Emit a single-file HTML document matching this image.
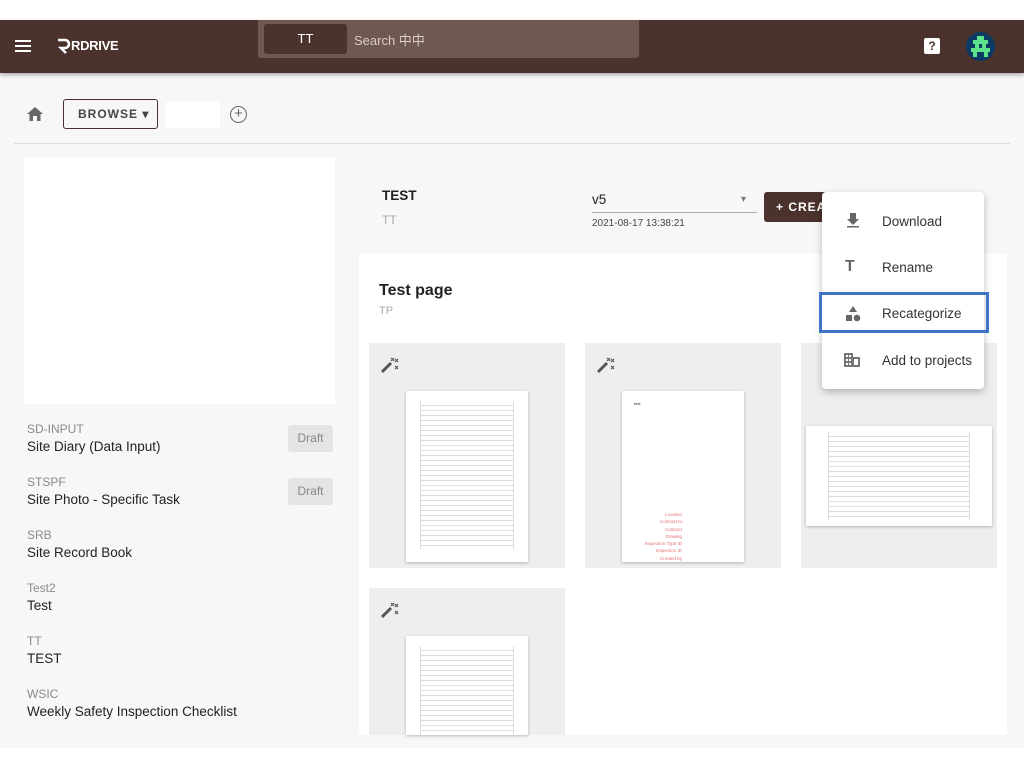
<!DOCTYPE html>
<html><head><style>
*{box-sizing:border-box;margin:0;padding:0}
body{width:1024px;height:768px;background:#fff;font-family:"Liberation Sans","Noto Sans CJK SC",sans-serif;position:relative;overflow:hidden;color:#212121}
.abs{position:absolute}
.hdr{left:0;top:20px;width:1024px;height:53px;background:#4b322c;box-shadow:0 2px 4px rgba(0,0,0,.3)}
.main{left:0;top:73px;width:1024px;height:675px;background:#f7f7f7}
.tile{background:#eeeeee}
.page{background:#fff;box-shadow:0 1px 3px rgba(0,0,0,.25)}
.lbl{font-size:12px;color:#8a8a8a}
.nm{font-size:13.5px;color:#222}
.draft{background:#e4e4e4;color:#888;font-size:12px;width:45px;height:27px;line-height:27px;text-align:center;border-radius:3px}
.mi{font-size:13.5px;color:#333}
.lines{background:repeating-linear-gradient(#fff 0 4px,#ddd 4px 5px);border-left:1px solid #ddd;border-right:1px solid #ddd}
</style></head><body>
<div class="abs main"></div>
<div class="abs hdr"></div>
<div class="abs" style="left:15px;top:40px;width:16px;height:2px;background:#fff;box-shadow:0 5px 0 #fff,0 10px 0 #fff"></div>
<svg class="abs" style="left:56px;top:37px" width="16" height="17"><path d="M2 3h7a4 4 0 0 1 0 8H5l5 5" stroke="#fff" stroke-width="2.6" fill="none"/></svg>
<div class="abs" style="left:71px;top:38px;color:#fff;font-size:13px;font-weight:bold;letter-spacing:-0.3px">RDRIVE</div>
<div class="abs" style="left:258px;top:20px;width:381px;height:38px;background:#6e5850;border-radius:0 0 3px 3px"></div>
<div class="abs" style="left:264px;top:24px;width:83px;height:30px;background:#4b322c;border-radius:3px;color:#fff;font-size:13px;text-align:center;line-height:30px">TT</div>
<div class="abs" style="left:354px;top:30px;color:#d8cdc8;font-size:13px">Search 中中</div>
<div class="abs" style="left:924px;top:38px;width:16px;height:16px;background:#fff;border-radius:2px;color:#4b322c;font-size:12px;font-weight:bold;text-align:center;line-height:16px">?</div>
<div class="abs" style="left:966px;top:32px;width:29px;height:29px;border-radius:50%;background:#0d3a63;overflow:hidden"><svg width="29" height="29"><g fill="#5de38a"><rect x="11" y="4" width="7" height="4"/><rect x="7" y="8" width="15" height="4"/><rect x="9" y="12" width="4" height="4"/><rect x="16" y="12" width="4" height="4"/><rect x="5" y="16" width="19" height="4"/><rect x="7" y="20" width="4" height="5"/><rect x="18" y="20" width="4" height="5"/></g></svg></div>
<svg class="abs" style="left:26px;top:106px" width="18" height="16"><path d="M9 1 L1 8 H3.5 V15 H7 V10 H11 V15 H14.5 V8 H17Z" fill="#666"/></svg>
<div class="abs" style="left:63px;top:99px;width:95px;height:30px;border:1px solid #4b322c;border-radius:3px;font-size:12px;font-weight:bold;letter-spacing:1px;color:#444;line-height:28px;padding-left:14px">BROWSE ▾</div>
<div class="abs" style="left:166px;top:102px;width:54px;height:26px;background:#fff"></div>
<div class="abs" style="left:230px;top:106px;width:17px;height:17px;border:1.5px solid #666;border-radius:50%;text-align:center;line-height:14px;font-size:15px;color:#666">+</div>
<div class="abs" style="left:14px;top:143px;width:996px;height:1px;background:#ddd"></div>
<div class="abs" style="left:24px;top:157px;width:311px;height:247px;background:#fff"></div>
<div class="abs lbl" style="left:27px;top:422px">SD-INPUT</div><div class="abs nm" style="left:27px;top:439px">Site Diary (Data Input)</div><div class="abs draft" style="left:288px;top:425px">Draft</div>
<div class="abs lbl" style="left:27px;top:475px">STSPF</div><div class="abs nm" style="left:27px;top:492px">Site Photo - Specific Task</div><div class="abs draft" style="left:288px;top:478px">Draft</div>
<div class="abs lbl" style="left:27px;top:528px">SRB</div><div class="abs nm" style="left:27px;top:545px">Site Record Book</div>
<div class="abs lbl" style="left:27px;top:581px">Test2</div><div class="abs nm" style="left:27px;top:598px">Test</div>
<div class="abs lbl" style="left:27px;top:634px">TT</div><div class="abs nm" style="left:27px;top:651px">TEST</div>
<div class="abs lbl" style="left:27px;top:687px">WSIC</div><div class="abs nm" style="left:27px;top:704px">Weekly Safety Inspection Checklist</div>
<div class="abs" style="left:382px;top:188px;font-size:13.5px;font-weight:bold">TEST</div>
<div class="abs lbl" style="left:382px;top:213px;color:#aaa">TT</div>
<div class="abs" style="left:592px;top:192px;font-size:13.5px">v5</div>
<div class="abs" style="left:741px;top:194px;font-size:10px;color:#777">▾</div>
<div class="abs" style="left:592px;top:212px;width:165px;height:1px;background:#aaa"></div>
<div class="abs" style="left:592px;top:218px;font-size:10px;color:#444">2021-08-17 13:38:21</div>
<div class="abs" style="left:764px;top:192px;width:80px;height:30px;background:#4b322c;border-radius:3px;color:#fff;font-size:12px;font-weight:bold;letter-spacing:1px;line-height:30px;padding-left:12px">+ CREATE</div>
<div class="abs" style="left:359px;top:254px;width:648px;height:481px;background:#fff"></div>
<div class="abs" style="left:379px;top:282px;font-size:16px;font-weight:bold;color:#222">Test page</div>
<div class="abs lbl" style="left:379px;top:305px;color:#aaa;font-size:11px">TP</div>
<div class="abs tile" style="left:369px;top:343px;width:196px;height:225px"></div>
<div class="abs tile" style="left:585px;top:343px;width:196px;height:225px"></div>
<div class="abs tile" style="left:801px;top:343px;width:196px;height:225px"></div>
<div class="abs tile" style="left:369px;top:588px;width:196px;height:147px"></div>
<svg class="abs" style="left:380px;top:355px" width="20" height="20"><path d="M2 17l9-9" stroke="#555" stroke-width="3"/><path d="M11 3l3 3M14 3l-3 3M15 4l3 3M18 4l-3 3M15 11l3 3M18 11l-3 3" stroke="#555" stroke-width="1.2"/></svg>
<svg class="abs" style="left:596px;top:355px" width="20" height="20"><path d="M2 17l9-9" stroke="#555" stroke-width="3"/><path d="M11 3l3 3M14 3l-3 3M15 4l3 3M18 4l-3 3M15 11l3 3M18 11l-3 3" stroke="#555" stroke-width="1.2"/></svg>
<svg class="abs" style="left:380px;top:600px" width="20" height="20"><path d="M2 17l9-9" stroke="#555" stroke-width="3"/><path d="M11 3l3 3M14 3l-3 3M15 4l3 3M18 4l-3 3M15 11l3 3M18 11l-3 3" stroke="#555" stroke-width="1.2"/></svg>
<div class="abs page" style="left:406px;top:391px;width:122px;height:171px"><div class="abs lines" style="left:14px;top:10px;width:94px;height:148px"></div></div>
<div class="abs page" style="left:622px;top:391px;width:122px;height:171px"><div class="abs" style="left:12px;top:10px;font-size:4px">test</div><div class="abs" style="left:10px;top:120px;font-size:4.5px;color:#e57373;line-height:7.3px;text-align:right;width:50px">Location<br>Contract to<br>Contract<br>Drawing<br>Inspection Type ID<br>Inspection ID<br>Created by</div></div>
<div class="abs page" style="left:806px;top:426px;width:186px;height:100px"><div class="abs lines" style="left:22px;top:6px;width:142px;height:88px"></div></div>
<div class="abs page" style="left:406px;top:636px;width:122px;height:99px"><div class="abs lines" style="left:14px;top:10px;width:94px;height:89px"></div></div>
<div class="abs" style="left:822px;top:192px;width:162px;height:197px;background:#fff;border-radius:4px;box-shadow:0 3px 8px rgba(0,0,0,.25)"></div>
<svg class="abs" style="left:845px;top:212px" width="16" height="16"><path d="M5 1h6v6h3l-6 6-6-6h3z M2 14h12v1.5H2z" fill="#666"/></svg>
<div class="abs mi" style="left:882px;top:214px">Download</div>
<div class="abs" style="left:845px;top:258px;font-size:16px;font-weight:bold;color:#666">T</div>
<div class="abs mi" style="left:882px;top:260px">Rename</div>
<div class="abs" style="left:819px;top:292px;width:170px;height:41px;border:3px solid #3f74c4"></div>
<svg class="abs" style="left:844px;top:305px" width="18" height="18"><path d="M9 1l4 6H5z" fill="#666"/><rect x="2" y="10" width="6" height="6" fill="#666"/><circle cx="13" cy="13" r="3.3" fill="#666"/></svg>
<div class="abs mi" style="left:882px;top:306px">Recategorize</div>
<svg class="abs" style="left:843px;top:352px" width="18" height="16"><path d="M1 1h9v4h7v10H1z" fill="#777"/><g fill="#fff"><rect x="3" y="3" width="2" height="2"/><rect x="6" y="3" width="2" height="2"/><rect x="3" y="7" width="2" height="2"/><rect x="6" y="7" width="2" height="2"/><rect x="3" y="11" width="2" height="2"/><rect x="6" y="11" width="2" height="2"/><rect x="11" y="7" width="4" height="6"/></g></svg>
<div class="abs mi" style="left:882px;top:353px">Add to projects</div>
</body></html>
